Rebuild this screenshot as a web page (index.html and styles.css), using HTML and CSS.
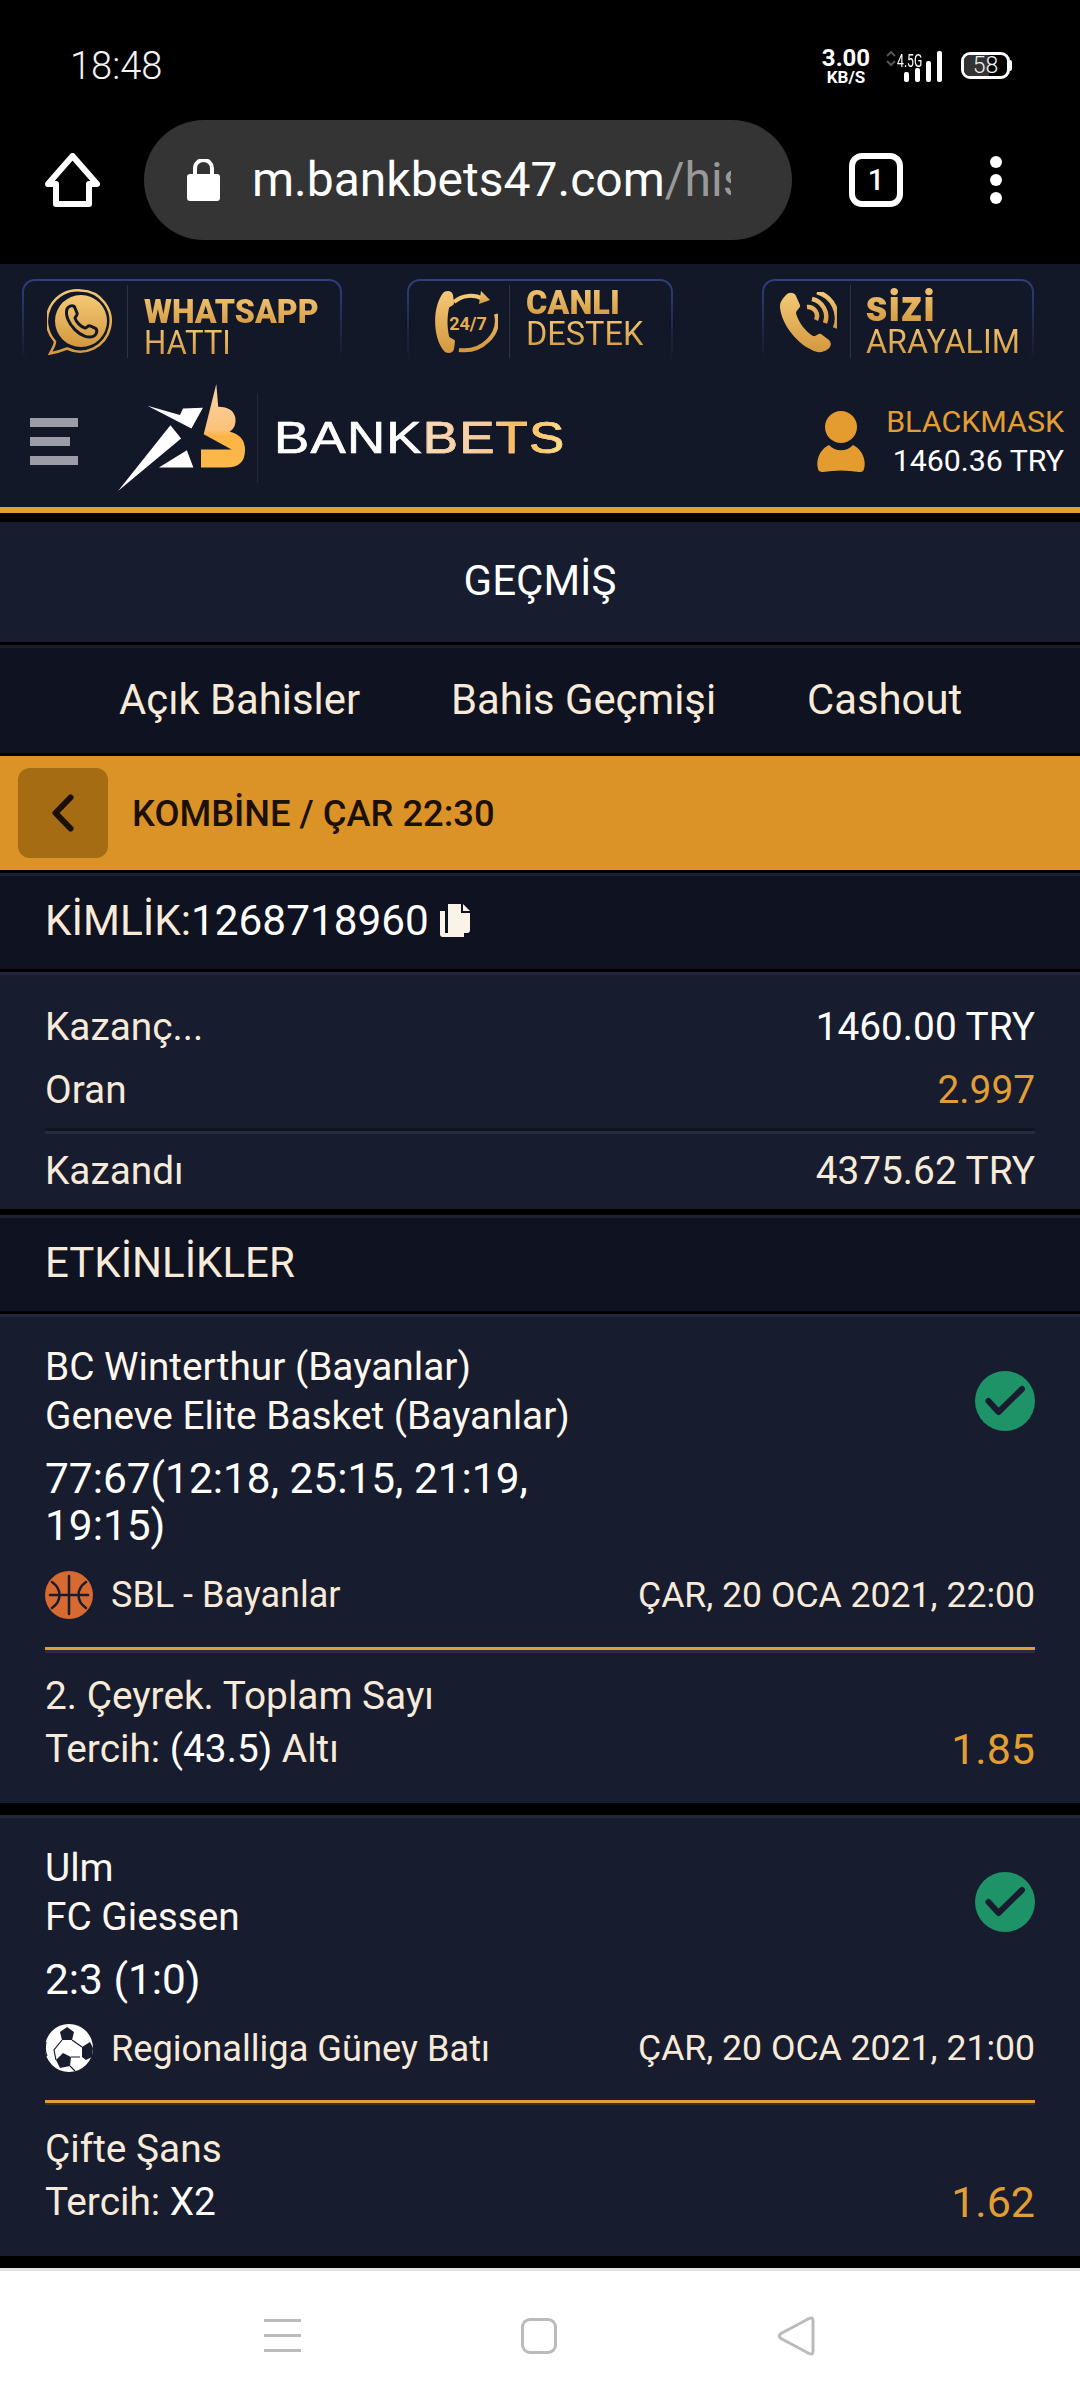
FILE: index.html
```html
<!DOCTYPE html>
<html lang="tr">
<head>
<meta charset="utf-8">
<title>BankBets</title>
<link rel="stylesheet" href="styles.css">
</head>
<body>
<svg class="defs" width="0" height="0" aria-hidden="true">
  <defs>
    <linearGradient id="gold" x1="0" y1="0" x2="0" y2="1"><stop offset="0" stop-color="#f3c977"/><stop offset="1" stop-color="#d4983f"/></linearGradient>
    <linearGradient id="bee" x1="0" y1="0" x2="0" y2="1"><stop offset="0" stop-color="#fbd3a6"/><stop offset=".55" stop-color="#fbc27a"/><stop offset=".62" stop-color="#fdb445"/><stop offset="1" stop-color="#fbb949"/></linearGradient>
  </defs>
</svg>
<div class="phone">
  <div class="chrome">
    <div class="status">
      <span class="time">18:48</span>
      <div class="sys">
        <div class="speed"><b>3.00</b><b class="unit">KB/S</b></div>
        <div class="sigwrap">
          <svg width="58" height="32" viewBox="0 0 58 32"><path d="M2 5l4-4 4 4M2 10l4 4 4-4" fill="none" stroke="#555" stroke-width="2"/><rect x="19" y="21" width="5" height="10" rx="2" fill="#fff"/><rect x="30" y="17" width="5" height="14" rx="2" fill="#fff"/><rect x="41" y="10" width="5" height="21" rx="2" fill="#fff"/><rect x="52" y="0" width="5" height="31" rx="2" fill="#fff"/></svg>
          <span class="net">4.5G</span>
        </div>
        <div class="battery"><span class="fill"></span><span class="pct">58</span></div>
        <i class="nub"></i>
      </div>
    </div>
    <div class="toolbar">
      <svg class="home" width="55" height="54" viewBox="0 0 55 54"><path d="M27.500 3 L52 31 H44 V51 H11 V31 H3 Z" fill="none" stroke="#fff" stroke-width="6" stroke-linejoin="round"/></svg>
      <div class="omni">
        <svg width="33" height="42" viewBox="0 0 33 42"><path d="M8 17V9a8.500 8 0 0 1 17 0v8" fill="none" stroke="#fff" stroke-width="4"/><rect x="0" y="15" width="33" height="27" rx="3" fill="#fff"/></svg>
        <span class="url">m.bankbets47.com<span class="path">/his</span></span>
      </div>
      <div class="tabs-count">1</div>
      <div class="dots"><i></i><i></i><i></i></div>
    </div>
  </div>

  <header class="site">
    <div class="promos">
      <div class="promo p1">
        <svg class="pi" width="66" height="66" viewBox="0 0 66 66"><path d="M34 1.500a30.500 30.500 0 1 1-14 58c-5 2-11 4-17 5 2-4 5-8 5-12A30.500 30.500 0 0 1 34 1.500Z" fill="none" stroke="url(#gold)" stroke-width="2.500"/><circle cx="34" cy="32" r="26" fill="url(#gold)"/><path d="M20 20c2-4 7-4 8-1l2 5c1 2-2 4-2 5 1 4 6 9 10 10 2 0 3-3 5-2l5 2c3 2 2 6-1 8-11 6-31-14-27-27Z" fill="none" stroke="#131829" stroke-width="3"/></svg>
        <i class="sep"></i>
        <div class="ptext"><b>WHATSAPP</b><span>HATTI</span></div>
      </div>
      <div class="promo p2">
        <svg class="pi" width="64" height="65" viewBox="0 0 64 65"><path d="M10 2c4-2 8-1 9 3l1 8c0 3-4 3-5 5-2 9-2 19 0 28 1 3 5 2 6 5l-1 8c-1 4-5 5-9 3-13-13-13-47-1-60Z" fill="url(#gold)"/><path d="M20 12c8-7 20-8 29-3M62 24c5 20-14 39-37 36" fill="none" stroke="url(#gold)" stroke-width="4"/><path d="M47 1l9 9-11 4Z" fill="url(#gold)"/><text x="34" y="40" class="t247">24/7</text></svg>
        <i class="sep"></i>
        <div class="ptext"><b>CANLI</b><span>DESTEK</span></div>
      </div>
      <div class="promo p3">
        <svg class="pi" width="57" height="61" viewBox="0 0 57 61"><path d="M6 3c3-3 8-3 10 1l4 9c1 3-4 5-4 8 2 9 10 19 17 23 3 1 5-3 8-2l8 6c3 3 2 7-1 9-5 4-11 4-16 1C14 50 0 28 0 14c0-4 3-8 6-11Z" fill="url(#gold)"/><path d="M27 15a9 9 0 0 1 9 13M32 7a18 18 0 0 1 13 24M37 0a27 27 0 0 1 18 36" fill="none" stroke="url(#gold)" stroke-width="4.500"/></svg>
        <i class="sep"></i>
        <div class="ptext"><b>sizi</b><span>ARAYALIM</span></div>
      </div>
    </div>
    <div class="brandbar">
      <div class="burger"><i></i><i class="short"></i><i></i></div>
      <svg class="logo" width="127" height="107" viewBox="308 372 332 320" preserveAspectRatio="none"><path d="M385 437 L470 465 L478 445 L530 443 L500 505 Z M308 692 L445 495 L473 535 Z M415 622 L488 570 L505 622 Z" fill="#fff"/><path d="M565 372 L532 522 L605 568 L525 568 L525 622 L590 622 Q640 622 640 570 Q640 525 600 515 Q618 500 615 475 Q610 440 570 440 Z" fill="url(#bee)"/></svg>
      <i class="brandsep"></i>
      <span class="wordmark"><span class="bank">BANK</span><span class="bets">BETS</span></span>
      <div class="user">
        <svg width="48" height="61" viewBox="0 0 48 61"><circle cx="24" cy="16" r="16" fill="#e59c2e"/><path d="M1 58c-3-11 4-21 11-24 6 7 18 7 24 0 7 3 14 13 11 24-1 3-3 3-5 3-12-2-24-2-36 0-2 0-4 0-5-3Z" fill="#e59c2e"/></svg>
        <div class="uinfo"><span class="uname">BLACKMASK</span><span class="ubal">1460.36 TRY</span></div>
      </div>
    </div>
  </header>

  <main>
    <div class="title">GEÇMİŞ</div>
    <nav class="nav"><span>Açık Bahisler</span><span>Bahis Geçmişi</span><span>Cashout</span></nav>
    <div class="orange">
      <div class="back"><svg width="22" height="38" viewBox="0 0 22 38"><path d="M18.500 3.500 L3.500 19 L18.500 34.500" fill="none" stroke="#1a1005" stroke-width="6" stroke-linecap="round" stroke-linejoin="round"/></svg></div>
      <span>KOMBİNE / ÇAR 22:30</span>
    </div>
    <div class="band kimlik">
      <span>KİMLİK:<span class="white">1268718960</span></span>
      <svg width="30" height="33" viewBox="0 0 30 33"><path d="M0 7h5v22h19v4H3c-2 0-3-1-3-3Z" fill="#fbf3e8"/><path d="M8 0h13v9h9v17c0 2-1 3-3 3H8Z" fill="#fbf3e8"/><path d="M23 0l7 7h-7Z" fill="#fbf3e8"/></svg>
    </div>
    <section class="summary">
      <div class="srow"><span>Kazanç...</span><span class="white">1460.00 TRY</span></div>
      <div class="srow divided"><span>Oran</span><span class="gold">2.997</span></div>
      <div class="srow"><span>Kazandı</span><span>4375.62 TRY</span></div>
    </section>
    <div class="band events">ETKİNLİKLER</div>

    <article class="card c1">
      <div class="top">
        <div class="teams">
          <p>BC Winterthur (Bayanlar)</p>
          <p>Geneve Elite Basket (Bayanlar)</p>
          <p class="score">77:67(12:18, 25:15, 21:19, 19:15)</p>
        </div>
        <svg class="ok" width="60" height="60" viewBox="0 0 60 60"><circle cx="30" cy="30" r="30" fill="#1e9367"/><path d="M13.500 30 L23.500 41 L47 18" fill="none" stroke="#171c2f" stroke-width="6" stroke-linecap="round" stroke-linejoin="round"/></svg>
      </div>
      <div class="league">
        <svg width="48" height="48" viewBox="0 0 48 48"><circle cx="24" cy="24" r="24" fill="#d76a30"/><path d="M24 5v38M5 24h38M7 11C17 18 17 30 7 37M41 11C31 18 31 30 41 37" fill="none" stroke="#171c2f" stroke-width="2.500" stroke-linecap="round"/></svg>
        <span class="lname">SBL - Bayanlar</span>
        <span class="date">ÇAR, 20 OCA 2021, 22:00</span>
      </div>
      <div class="market">
        <p>2. Çeyrek. Toplam Sayı</p>
        <div class="pick"><span>Tercih: <span class="white">(43.5)</span> Altı</span><span class="odd">1.85</span></div>
      </div>
    </article>

    <article class="card c2">
      <div class="top">
        <div class="teams">
          <p>Ulm</p>
          <p>FC Giessen</p>
          <p class="score">2:3 (1:0)</p>
        </div>
        <svg class="ok" width="60" height="60" viewBox="0 0 60 60"><circle cx="30" cy="30" r="30" fill="#1e9367"/><path d="M13.500 30 L23.500 41 L47 18" fill="none" stroke="#171c2f" stroke-width="6" stroke-linecap="round" stroke-linejoin="round"/></svg>
      </div>
      <div class="league">
        <svg width="48" height="48" viewBox="0 0 48 48"><circle cx="24" cy="24" r="24" fill="#fff"/><path d="M15 8l7-5 7 5-2 8H17ZM37 23l8-5 3 6-1 9-6 3-4-3ZM11 36l7-7 8 4-1 9-10 2Z" fill="#171c2f"/><path d="M1 18c-1 5-1 10 1 14M17 16l-8 10 2 10M27 16l10 7M35 33l-9 0M25 42l5 5" fill="none" stroke="#171c2f" stroke-width="1.200"/></svg>
        <span class="lname">Regionalliga Güney Batı</span>
        <span class="date">ÇAR, 20 OCA 2021, 21:00</span>
      </div>
      <div class="market">
        <p>Çifte Şans</p>
        <div class="pick"><span>Tercih: <span class="white">X2</span></span><span class="odd">1.62</span></div>
      </div>
    </article>
  </main>

  <div class="navbar">
    <div class="nb-menu"><i></i><i></i><i></i></div>
    <div class="nb-square"></div>
    <svg width="38" height="40" viewBox="0 0 38 40"><path d="M32 2.500 Q36 0.500 36 5 V35 Q36 39.500 32 37.500 L4 22.500 Q0.500 20 4 17.500 Z" fill="none" stroke="#bbb" stroke-width="3"/></svg>
  </div>
</div>
</body>
</html>
```
FILE: styles.css
```css
* { box-sizing: border-box; }
html, body { margin: 0; padding: 0; background: #000; }
p { margin: 0; }
i { display: block; }
.defs { position: absolute; }
.phone { width: 1080px; height: 2400px; display: flex; flex-direction: column; font-family: Roboto, "Noto Sans", sans-serif; color: #f8ead8; overflow: hidden; background: #000; }
.white { color: #fff; }
.gold { color: #e39e33; }

.chrome { height: 264px; background: #000; flex: none; }
.status { height: 120px; display: flex; justify-content: space-between; align-items: flex-start; padding: 46px 68px 0 70px; }
.time { font-size: 38px; line-height: 40px; color: #f4f4f4; font-weight: 300; }
.sys { display: flex; align-items: flex-start; }
.speed { display: flex; flex-direction: column; align-items: center; color: #fff; width: 52px; }
.speed b { font-size: 24px; line-height: 24px; font-weight: 700; }
.speed .unit { font-size: 17px; line-height: 17px; margin-top: -1px; }
.sigwrap { position: relative; width: 58px; height: 32px; margin: 5px 0 0 13px; }
.net { position: absolute; left: 12px; top: 0; font-size: 18px; line-height: 20px; font-weight: 400; color: #fff; transform: scaleX(.68); transform-origin: left; }
.battery { position: relative; width: 49px; height: 27px; margin: 6px 0 0 18px; border: 3px solid #fff; border-radius: 9px; overflow: hidden; display: flex; align-items: center; justify-content: center; }
.battery .fill { position: absolute; left: 0; top: 0; bottom: 0; width: 58%; background: #333; }
.battery .pct { position: relative; font-size: 23px; line-height: 23px; color: #eee; font-weight: 300; }
.nub { width: 2px; height: 11px; margin-top: 14px; background: #fff; border-radius: 0 2px 2px 0; }
.toolbar { height: 120px; display: flex; align-items: center; }
.home { margin-left: 45px; flex: none; }
.omni { width: 648px; height: 120px; margin-left: 44px; border-radius: 60px; background: #343434; display: flex; align-items: center; gap: 32px; padding-left: 43px; flex: none; }
.url { width: 479px; font-size: 48px; line-height: 56px; color: #fff; white-space: nowrap; overflow: hidden; font-weight: 400; }
.path { color: #999; }
.tabs-count { width: 54px; height: 54px; margin-left: 57px; border: 6px solid #fff; border-radius: 13px; font-size: 29px; font-weight: 500; line-height: 42px; text-align: center; color: #fff; flex: none; }
.dots { margin-left: 87px; display: flex; flex-direction: column; gap: 6px; }
.dots i { width: 12px; height: 12px; border-radius: 50%; background: #fff; }

.site { height: 249px; background: #131829; flex: none; display: flex; flex-direction: column; border-bottom: 6px solid #e39e33; }
.promos { display: flex; height: 95px; padding-top: 15px; flex: none; }
.promo { height: 86px; border: 2px solid transparent; border-radius: 13px; display: flex; align-items: flex-start; flex: none; background: linear-gradient(#131829, #131829) padding-box, linear-gradient(#30407c, #131829 95%) border-box; }
.p1 { margin-left: 22px; width: 320px; padding-left: 23px; }
.p2 { margin-left: 65px; width: 266px; padding-left: 25px; }
.p3 { margin-left: 89px; width: 272px; padding-left: 16px; }
.pi { flex: none; margin-top: 8px; }
.p2 .pi { margin-top: 9px; }
.p3 .pi { margin-top: 11px; }
.sep { width: 1px; height: 73px; margin: 4px 0 0 14px; background: #2c3347; flex: none; }
.p2 .sep { margin-left: 11px; }
.p3 .sep { margin-left: 13px; }
.ptext { display: flex; flex-direction: column; align-items: flex-start; margin: 14px 0 0 16px; white-space: nowrap; transform-origin: left; }
.p1 .ptext { transform: scaleX(.945); }
.p3 .ptext { transform: scaleX(.95); }
.p2 .ptext { margin-top: 7px; }
.p3 .ptext { margin-top: 6px; margin-left: 15px; }
.ptext b, .ptext span { display: block; background: linear-gradient(#f1c472, #d2983f); -webkit-background-clip: text; background-clip: text; color: transparent; }
.ptext b { font-size: 34px; line-height: 33px; font-weight: 900; }
.ptext span { font-size: 34px; line-height: 30px; font-weight: 400; }
.p1 .ptext span { font-size: 33px; }
.p2 .ptext b { font-size: 32.500px; line-height: 31px; }
.p2 .ptext span { font-size: 32.500px; line-height: 31px; }
.p3 .ptext b { font-size: 44px; line-height: 38px; letter-spacing: 1px; }
.p3 .ptext span { line-height: 32px; }
.t247 { font-family: Roboto, sans-serif; font-size: 18px; font-weight: 700; fill: #e5ad53; text-anchor: middle; }

.brandbar { flex: 1; display: flex; align-items: flex-start; }
.burger { margin: 59px 0 0 30px; display: flex; flex-direction: column; gap: 10px; width: 48px; flex: none; }
.burger i { height: 9px; background: #9a9da6; }
.burger i.short { width: 40px; }
.logo { margin: 25px 0 0 40px; flex: none; }
.brandsep { width: 1px; height: 90px; margin: 34px 0 0 12px; background: #242a3c; flex: none; }
.wordmark { margin: 53px 0 0 16px; font-family: "Liberation Sans", sans-serif; font-size: 45px; line-height: 52px; letter-spacing: 1px; white-space: nowrap; transform: scaleX(1.175); transform-origin: left; flex: none; }
.bank { color: #fff; -webkit-text-stroke: .7px #fff; }
.bets { background: linear-gradient(90deg, #f8ddbd 0, #f6c998 48%, #fdb94a 66%, #fde184 100%); -webkit-background-clip: text; background-clip: text; color: transparent; -webkit-text-stroke: .7px #f6c998; }
.user { margin: 43px 16px 0 auto; display: flex; align-items: center; gap: 21px; }
.uinfo { display: flex; flex-direction: column; align-items: flex-end; }
.uname { font-size: 30.400px; line-height: 39px; color: #e39e33; font-weight: 400; }
.ubal { font-size: 30.300px; line-height: 39px; color: #fff; }

main { flex: 1; display: flex; flex-direction: column; padding-top: 9px; }
.title { height: 120px; flex: none; background: #171c2f; font-size: 42px; line-height: 118px; text-align: center; color: #fff; }
.nav { height: 108px; flex: none; margin-top: 3px; border-top: 3px solid #1a1e2b; background: #0f1220; display: flex; align-items: center; padding: 0 0 3px 119px; gap: 91px; font-size: 41.800px; }
.orange { height: 114px; flex: none; margin-top: 3px; background: #db9226; display: flex; align-items: center; padding-left: 18px; gap: 24px; font-size: 36.300px; font-weight: 500; color: #1a1005; }
.back { width: 90px; height: 90px; border-radius: 12px; background: #a56c13; display: flex; align-items: center; justify-content: center; }
.band { flex: none; background: #0f1220; border-top: 3px solid #1c2130; display: flex; align-items: center; padding: 0 0 5px 45px; font-size: 42px; }
.kimlik { height: 96px; margin-top: 3px; gap: 11px; font-size: 42.300px; }
.summary { height: 237px; flex: none; margin-top: 3px; background: #171c2f; border-top: 3px solid #222839; padding: 20px 45px 0; font-size: 38.800px; }
.srow { display: flex; justify-content: space-between; height: 63px; line-height: 63px; }
.srow.divided { height: 73px; border-bottom: 3px solid #101421; box-shadow: 0 3px 0 #262b3f; margin-bottom: 8px; }
.band.events { height: 96px; margin-top: 6px; }
.card { flex: none; background: #171c2f; border-top: 3px solid #222839; padding: 26px 45px 0; font-size: 38.800px; color: #fdf7ee; }
.c1 { height: 489px; margin-top: 3px; }
.c2 { height: 441px; margin-top: 12px; }
.top { display: flex; justify-content: space-between; align-items: flex-start; }
.teams { width: 560px; }
.teams p { line-height: 48.500px; }
.teams .score { font-size: 42.400px; line-height: 47px; margin-top: 15px; color: #fff; }
.ok { margin-top: 28px; flex: none; }
.league { display: flex; align-items: center; height: 48px; margin-top: 22px; color: #f8ead8; }
.c2 .league { margin-top: 21px; }
.lname { margin-left: 18px; font-size: 36px; }
.c2 .lname { font-size: 36.200px; }
.date { margin-left: auto; font-size: 35.600px; }
.market { margin-top: 28px; border-top: 3px solid #e39e33; padding-top: 23px; position: relative; color: #f8ead8; }
.market::before { content: ""; position: absolute; left: 0; right: 0; top: 0; height: 3px; background: #262b3f; }
.c2 .market::before { background: #3c2f25; height: 2px; }
.market p { line-height: 46px; }
.pick { display: flex; justify-content: space-between; align-items: center; margin-top: 7px; line-height: 46px; }
.odd { color: #e39e33; font-size: 43px; font-weight: 400; }

.navbar { height: 132px; flex: none; background: #fff; border-top: 3px solid #e2e2e2; display: flex; align-items: center; justify-content: space-between; padding: 0 265px 0 264px; }
.nb-menu { width: 37px; display: flex; flex-direction: column; gap: 12px; }
.nb-menu i { height: 3px; background: #bbb; }
.nb-square { width: 36px; height: 36px; border: 3px solid #bbb; border-radius: 9px; }
```
